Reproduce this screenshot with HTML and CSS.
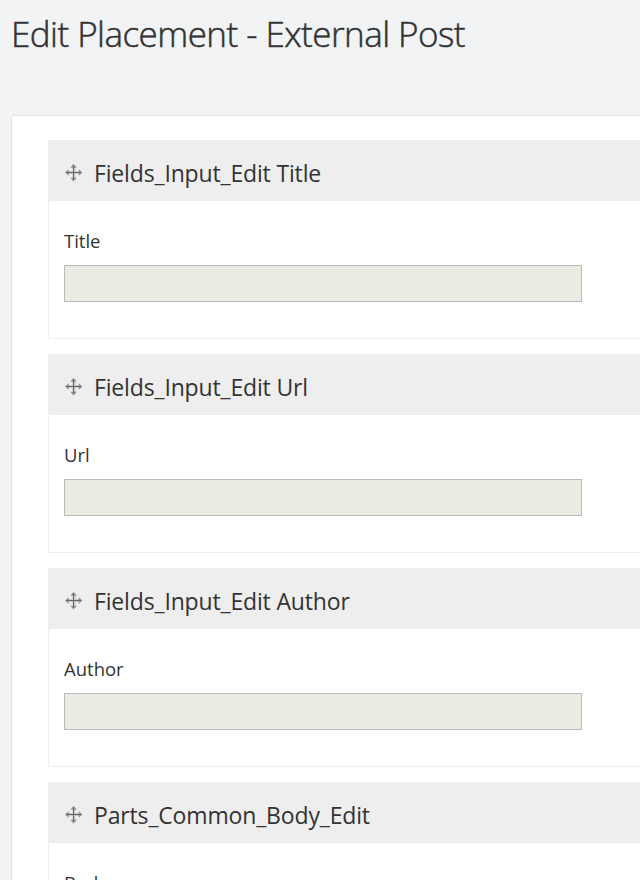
FILE: index.html
```html
<!DOCTYPE html>
<html lang="en">
<head>
<meta charset="utf-8">
<title>Edit Placement - External Post</title>
<link rel="stylesheet" href="styles.css">
</head>
<body>
<svg class="defs" aria-hidden="true">
  <symbol id="move" viewBox="0 0 18 18">
    <path d="M9 1V16M1 8.5H16" fill="none" stroke="#666" stroke-opacity=".25" stroke-width="3"/>
    <path d="M8.5 1V16M1 8.5H16" fill="none" stroke="#666" stroke-width="1"/>
    <path d="M8.5 0L11.7 3.8H5.3ZM8.5 17.5L5.3 13.7H11.7ZM0 8.5L3.8 5.3V11.7ZM17.5 8.5L13.7 11.7V5.3Z" fill="#777" fill-opacity=".75"/>
  </symbol>
</svg>
<h1 class="page-title">Edit Placement - External Post</h1>
<main class="panel">
  <section class="shape">
    <h2 class="shape-header"><svg class="icon"><use href="#move"/></svg><span>Fields_Input_Edit Title</span></h2>
    <div class="shape-body"><label class="label" for="title">Title</label><input class="field" id="title" disabled></div>
  </section>
  <section class="shape">
    <h2 class="shape-header"><svg class="icon"><use href="#move"/></svg><span>Fields_Input_Edit Url</span></h2>
    <div class="shape-body"><label class="label" for="url">Url</label><input class="field" id="url" disabled></div>
  </section>
  <section class="shape">
    <h2 class="shape-header"><svg class="icon"><use href="#move"/></svg><span>Fields_Input_Edit Author</span></h2>
    <div class="shape-body"><label class="label" for="author">Author</label><input class="field" id="author" disabled></div>
  </section>
  <section class="shape">
    <h2 class="shape-header"><svg class="icon"><use href="#move"/></svg><span>Parts_Common_Body_Edit</span></h2>
    <div class="shape-body"><label class="label" for="body">Body</label><input class="field" id="body" disabled></div>
  </section>
</main>
</body>
</html>
```
FILE: styles.css
```css
* { box-sizing: border-box; }
html, body { height: 880px; overflow: hidden; }
body {
  margin: 0;
  background: #f2f3f5;
  color: #333;
  font-family: "Open Sans", "Noto Sans", sans-serif;
}
.defs { display: none; }
.page-title {
  margin: 0 0 0 11px;
  height: 115px;
  padding-top: 10px;
  font-size: 35px;
  line-height: 48px;
  font-weight: 300;
  letter-spacing: -0.54px;
  -webkit-text-stroke: 0.5px #333;
  white-space: nowrap;
}
.panel {
  margin-left: 11px;
  padding: 24px 0 0 36px;
  background: #fff;
  border: 1px solid #e4e5e6;
  border-right: 0;
  border-top-left-radius: 3px;
}
.shape {
  height: 199px;
  margin-bottom: 15px;
  border: 1px solid #eee;
  border-right: 0;
}
.shape-header {
  display: flex;
  align-items: center;
  gap: 11px;
  height: 60px;
  margin: 0;
  padding: 3px 0 0 16px;
  background: #eee;
  font-size: 23px;
  font-weight: 400;
  line-height: 32px;
  letter-spacing: -0.16px;
  white-space: nowrap;
}
.icon { width: 18px; height: 18px; margin-top: 1px; }
.shape-body { padding: 26px 15px 0; }
.label {
  display: block;
  height: 38px;
  font-size: 18.5px;
  line-height: 28px;
}
.field {
  display: block;
  width: 518px;
  height: 37px;
  padding: 0 8px;
  border: 1px solid #b9bab9;
  border-radius: 0;
  background: #ebebe3;
}
```
